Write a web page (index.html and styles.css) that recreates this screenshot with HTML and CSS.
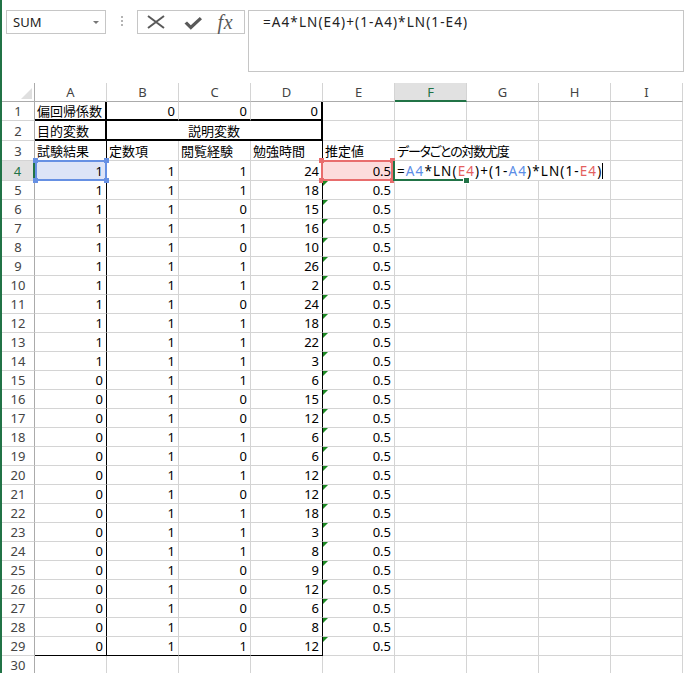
FILE: index.html
```html
<!DOCTYPE html>
<html lang="ja">
<head>
<meta charset="utf-8">
<title>Excel</title>
<link rel="stylesheet" href="styles.css">
</head>
<body>
<div class="app">
  <div class="bar">
    <div class="namebox"><span>SUM</span><span class="caret-down"></span></div>
    <div class="grip"><i></i><i></i><i></i></div>
    <div class="fxbox">
      <svg class="ic-x" width="18" height="14" viewBox="0 0 18 14"><path d="M1 1 L17 13 M17 1 L1 13" stroke="#595959" stroke-width="2" fill="none"/></svg>
      <svg class="ic-ok" width="18" height="13" viewBox="0 0 18 13"><path d="M0.5 6.5 L3 4.5 L6.8 8.2 L15.8 0 L18 2.2 L6.8 12.8 Z" fill="#595959"/></svg>
      <span class="fx">fx</span>
    </div>
    <div class="formula">=A4*LN(E4)+(1-A4)*LN(1-E4)</div>
  </div>
  <div class="sheet">
    <div class="corner"></div><div class="ch">A</div><div class="ch">B</div><div class="ch">C</div><div class="ch">D</div><div class="ch">E</div><div class="ch sel">F</div><div class="ch">G</div><div class="ch">H</div><div class="ch">I</div>

    <div class="rh">1</div><div class="c bR2 bB2">偏回帰係数</div><div class="c n bB2">0</div><div class="c n bB2">0</div><div class="c n bR2 bB2">0</div><div class="c"></div><div class="c"></div><div class="c"></div><div class="c"></div><div class="c"></div>
    <div class="rh">2</div><div class="c bR2 bB2">目的変数</div><div class="c ctr bR2 bB2 span3">説明変数</div><div class="c"></div><div class="c"></div><div class="c"></div><div class="c"></div><div class="c"></div>
    <div class="rh">3</div><div class="c bR">試験結果</div><div class="c">定数項</div><div class="c">閲覧経験</div><div class="c bR">勉強時間</div><div class="c">推定値</div><div class="c span2 tight">データごとの対数尤度</div><div class="c"></div><div class="c"></div>
    <div class="rh sel">4</div><div class="c n bR ref blue">1<span class="box"><i class="k tl"></i><i class="k tr"></i><i class="k bl"></i><i class="k br"></i></span></div><div class="c n">1</div><div class="c n">1</div><div class="c n bR">24</div><div class="c n ref red">0.5<span class="box"><i class="k tl"></i><i class="k tr"></i><i class="k bl"></i><i class="k br"></i></span></div><div class="c edit span3"><span class="tx">=<b class="fb">A4</b>*LN(<b class="fr">E4</b>)+(1-<b class="fb">A4</b>)*LN(1-<b class="fr">E4</b>)</span><span class="cursor"></span><i class="fh"></i></div><div class="c"></div>
    <div class="rh">5</div><div class="c n bR">1</div><div class="c n">1</div><div class="c n">1</div><div class="c n bR">18</div><div class="c n w">0.5</div><div class="c"></div><div class="c"></div><div class="c"></div><div class="c"></div>
    <div class="rh">6</div><div class="c n bR">1</div><div class="c n">1</div><div class="c n">0</div><div class="c n bR">15</div><div class="c n w">0.5</div><div class="c"></div><div class="c"></div><div class="c"></div><div class="c"></div>
    <div class="rh">7</div><div class="c n bR">1</div><div class="c n">1</div><div class="c n">1</div><div class="c n bR">16</div><div class="c n w">0.5</div><div class="c"></div><div class="c"></div><div class="c"></div><div class="c"></div>
    <div class="rh">8</div><div class="c n bR">1</div><div class="c n">1</div><div class="c n">0</div><div class="c n bR">10</div><div class="c n w">0.5</div><div class="c"></div><div class="c"></div><div class="c"></div><div class="c"></div>
    <div class="rh">9</div><div class="c n bR">1</div><div class="c n">1</div><div class="c n">1</div><div class="c n bR">26</div><div class="c n w">0.5</div><div class="c"></div><div class="c"></div><div class="c"></div><div class="c"></div>
    <div class="rh">10</div><div class="c n bR">1</div><div class="c n">1</div><div class="c n">1</div><div class="c n bR">2</div><div class="c n w">0.5</div><div class="c"></div><div class="c"></div><div class="c"></div><div class="c"></div>
    <div class="rh">11</div><div class="c n bR">1</div><div class="c n">1</div><div class="c n">0</div><div class="c n bR">24</div><div class="c n w">0.5</div><div class="c"></div><div class="c"></div><div class="c"></div><div class="c"></div>
    <div class="rh">12</div><div class="c n bR">1</div><div class="c n">1</div><div class="c n">1</div><div class="c n bR">18</div><div class="c n w">0.5</div><div class="c"></div><div class="c"></div><div class="c"></div><div class="c"></div>
    <div class="rh">13</div><div class="c n bR">1</div><div class="c n">1</div><div class="c n">1</div><div class="c n bR">22</div><div class="c n w">0.5</div><div class="c"></div><div class="c"></div><div class="c"></div><div class="c"></div>
    <div class="rh">14</div><div class="c n bR">1</div><div class="c n">1</div><div class="c n">1</div><div class="c n bR">3</div><div class="c n w">0.5</div><div class="c"></div><div class="c"></div><div class="c"></div><div class="c"></div>
    <div class="rh">15</div><div class="c n bR">0</div><div class="c n">1</div><div class="c n">1</div><div class="c n bR">6</div><div class="c n w">0.5</div><div class="c"></div><div class="c"></div><div class="c"></div><div class="c"></div>
    <div class="rh">16</div><div class="c n bR">0</div><div class="c n">1</div><div class="c n">0</div><div class="c n bR">15</div><div class="c n w">0.5</div><div class="c"></div><div class="c"></div><div class="c"></div><div class="c"></div>
    <div class="rh">17</div><div class="c n bR">0</div><div class="c n">1</div><div class="c n">0</div><div class="c n bR">12</div><div class="c n w">0.5</div><div class="c"></div><div class="c"></div><div class="c"></div><div class="c"></div>
    <div class="rh">18</div><div class="c n bR">0</div><div class="c n">1</div><div class="c n">1</div><div class="c n bR">6</div><div class="c n w">0.5</div><div class="c"></div><div class="c"></div><div class="c"></div><div class="c"></div>
    <div class="rh">19</div><div class="c n bR">0</div><div class="c n">1</div><div class="c n">0</div><div class="c n bR">6</div><div class="c n w">0.5</div><div class="c"></div><div class="c"></div><div class="c"></div><div class="c"></div>
    <div class="rh">20</div><div class="c n bR">0</div><div class="c n">1</div><div class="c n">1</div><div class="c n bR">12</div><div class="c n w">0.5</div><div class="c"></div><div class="c"></div><div class="c"></div><div class="c"></div>
    <div class="rh">21</div><div class="c n bR">0</div><div class="c n">1</div><div class="c n">0</div><div class="c n bR">12</div><div class="c n w">0.5</div><div class="c"></div><div class="c"></div><div class="c"></div><div class="c"></div>
    <div class="rh">22</div><div class="c n bR">0</div><div class="c n">1</div><div class="c n">1</div><div class="c n bR">18</div><div class="c n w">0.5</div><div class="c"></div><div class="c"></div><div class="c"></div><div class="c"></div>
    <div class="rh">23</div><div class="c n bR">0</div><div class="c n">1</div><div class="c n">1</div><div class="c n bR">3</div><div class="c n w">0.5</div><div class="c"></div><div class="c"></div><div class="c"></div><div class="c"></div>
    <div class="rh">24</div><div class="c n bR">0</div><div class="c n">1</div><div class="c n">1</div><div class="c n bR">8</div><div class="c n w">0.5</div><div class="c"></div><div class="c"></div><div class="c"></div><div class="c"></div>
    <div class="rh">25</div><div class="c n bR">0</div><div class="c n">1</div><div class="c n">0</div><div class="c n bR">9</div><div class="c n w">0.5</div><div class="c"></div><div class="c"></div><div class="c"></div><div class="c"></div>
    <div class="rh">26</div><div class="c n bR">0</div><div class="c n">1</div><div class="c n">0</div><div class="c n bR">12</div><div class="c n w">0.5</div><div class="c"></div><div class="c"></div><div class="c"></div><div class="c"></div>
    <div class="rh">27</div><div class="c n bR">0</div><div class="c n">1</div><div class="c n">0</div><div class="c n bR">6</div><div class="c n w">0.5</div><div class="c"></div><div class="c"></div><div class="c"></div><div class="c"></div>
    <div class="rh">28</div><div class="c n bR">0</div><div class="c n">1</div><div class="c n">0</div><div class="c n bR">8</div><div class="c n w">0.5</div><div class="c"></div><div class="c"></div><div class="c"></div><div class="c"></div>
    <div class="rh">29</div><div class="c n bR bB">0</div><div class="c n bB">1</div><div class="c n bB">1</div><div class="c n bR bB">12</div><div class="c n w">0.5</div><div class="c"></div><div class="c"></div><div class="c"></div><div class="c"></div>
    <div class="rh">30</div><div class="c"></div><div class="c"></div><div class="c"></div><div class="c"></div><div class="c"></div><div class="c"></div><div class="c"></div><div class="c"></div><div class="c"></div>
  </div>
</div>
</body>
</html>
```

FILE: styles.css
```css
html, body {
  margin: 0;
  padding: 0;
}
body {
  width: 684px;
  height: 673px;
  overflow: hidden;
  background: #fff;
  font-family: "Noto Sans", "Noto Sans CJK JP", sans-serif;
  font-feature-settings: "palt";
  font-size: 13px;
  color: #000;
}
.app {
  border-left: 2px solid #217346;
  height: 673px;
  box-sizing: border-box;
  overflow: hidden;
}

/* formula bar */
.bar {
  display: flex;
  align-items: flex-start;
  height: 83px;
  padding-top: 10px;
  box-sizing: border-box;
}
.namebox {
  margin-left: 4px;
  width: 101px;
  height: 24px;
  box-sizing: border-box;
  border: 1px solid #c6c6c6;
  display: flex;
  align-items: center;
  justify-content: space-between;
  padding: 0 6px 0 6px;
  color: #222;
  font-size: 13px;
}
.caret-down {
  width: 0;
  height: 0;
  border-left: 3px solid transparent;
  border-right: 3px solid transparent;
  border-top: 3px solid #777;
}
.grip {
  margin-left: 15px;
  margin-top: 6px;
  display: flex;
  flex-direction: column;
  gap: 2px;
}
.grip i {
  display: block;
  width: 2px;
  height: 2px;
  background: #b4b4b4;
}
.fxbox {
  margin-left: 14px;
  width: 110px;
  height: 24px;
  box-sizing: border-box;
  border: 1px solid #c6c6c6;
  display: flex;
  align-items: center;
  padding-left: 9px;
}
.ic-x { display: block; }
.ic-ok { display: block; margin-left: 19px; margin-top: 2px; }
.fx {
  margin-left: 16px;
  font-family: "Liberation Serif", serif;
  font-style: italic;
  font-size: 20px;
  color: #595959;
  line-height: 20px;
  letter-spacing: 0.5px;
}
.formula {
  flex: none;
  margin-left: 3px;
  width: 436px;
  height: 62px;
  box-sizing: border-box;
  border: 1px solid #c6c6c6;
  padding: 2px 0 0 14px;
  line-height: 18px;
  font-size: 13.5px;
  color: #222;
  letter-spacing: 1.1px;
}

/* sheet */
.sheet {
  display: grid;
  grid-template-columns: 33px repeat(9, 72px);
  grid-template-rows: 19px 19px 20px 20px 20px repeat(26, 19px);
}
.sheet > div {
  box-sizing: border-box;
  border-right: 1px solid #d4d4d4;
  border-bottom: 1px solid #d4d4d4;
  display: flex;
  align-items: center;
  white-space: nowrap;
  min-width: 0;
}
.corner {
  position: relative;
  border-right-color: #ababab !important;
  border-bottom-color: #ababab !important;
}
.corner::after {
  content: "";
  position: absolute;
  right: 2px;
  bottom: 2px;
  border-left: 11px solid transparent;
  border-bottom: 11px solid #dfdfdf;
}
.ch {
  justify-content: center;
  color: #444;
  border-bottom-color: #ababab !important;
}
.ch.sel {
  background: #e1e1e1;
  color: #217346;
  border-bottom: 2px solid #217346 !important;
}
.rh {
  justify-content: center;
  color: #444;
  border-right-color: #ababab !important;
}
.rh.sel {
  background: #e1e1e1;
  color: #217346;
  border-right: 2px solid #217346 !important;
}
.c { padding: 0 2px; }
.n { justify-content: flex-end; padding-right: 3px; }
.ctr { justify-content: center; }
.tight { letter-spacing: -1.2px; }
.span2 { grid-column: span 2; }
.span3 { grid-column: span 3; }

.sheet > .bR { border-right: 1px solid #000; }
.sheet > .bB { border-bottom: 1px solid #000; }
.sheet > .bR2 { border-right: 2px solid #000; }
.sheet > .bB2 { border-bottom: 2px solid #000; }

/* error indicator */
.w { position: relative; }
.w::before {
  content: "";
  position: absolute;
  left: 0;
  top: 0;
  border-top: 5px solid #1d8a24;
  border-right: 5px solid transparent;
}

/* reference highlights */
.ref { position: relative; }
.ref.blue { background: #dde4f7; }
.ref.red { background: #fcdcdc; }
.ref .box {
  position: absolute;
  left: 0;
  top: -1px;
  right: -1px;
  bottom: -1px;
  border: 2px solid #6690e3;
}
.ref.red .box {
  left: -2px;
  right: 1px;
  border-color: #e86d6d;
}
.k {
  position: absolute;
  width: 5px;
  height: 5px;
  background: #6690e3;
}
.red .k { background: #e86d6d; }
.k.tl { left: -4px; top: -4px; }
.k.tr { right: -4px; top: -4px; }
.k.bl { left: -4px; bottom: -4px; }
.k.br { right: -4px; bottom: -4px; }

/* cell in edit mode */
.edit {
  position: relative;
  background: #fff;
  font-size: 13.5px;
  letter-spacing: 1.1px;
}
.edit::before {
  content: "";
  position: absolute;
  left: -2px;
  top: 0;
  bottom: -1px;
  width: 2px;
  background: #217346;
}
.edit::after {
  content: "";
  position: absolute;
  left: 0;
  bottom: -1px;
  width: 72px;
  height: 2px;
  background: #217346;
}
.edit b { font-weight: normal; }
.fb { color: #5b8de6; }
.fr { color: #e45f5f; }
.cursor {
  display: inline-block;
  width: 1px;
  height: 16px;
  background: #000;
}
.fh {
  position: absolute;
  left: 68px;
  bottom: -4px;
  width: 5px;
  height: 5px;
  background: #217346;
  border: 1px solid #fff;
  z-index: 2;
}
```
